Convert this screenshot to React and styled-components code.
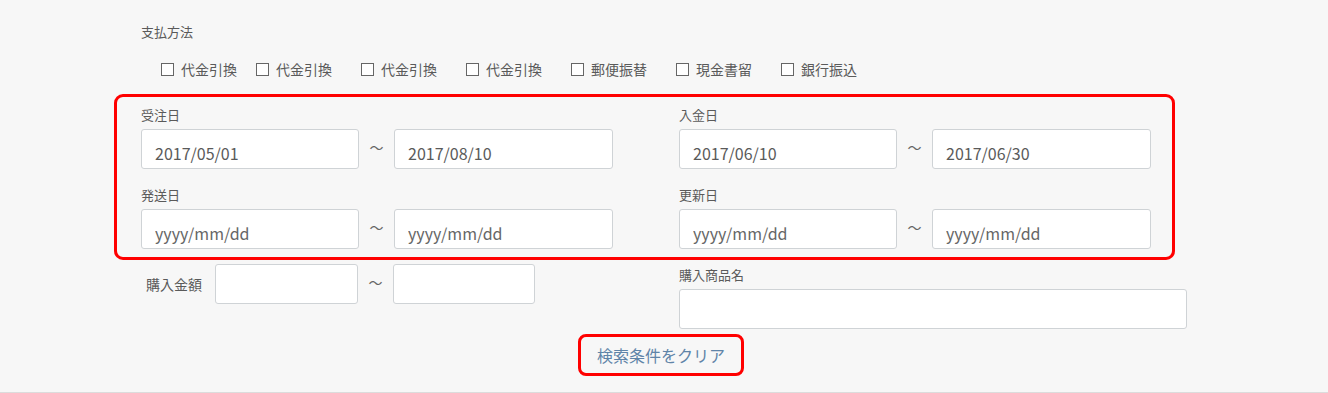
import React from "react";
import styled, { createGlobalStyle } from "styled-components";

const Global = createGlobalStyle`
  html, body { margin: 0; padding: 0; background: #f7f7f7; }
  body { font-family: "Noto Sans CJK JP", "Noto Sans", sans-serif; color: #555; }
  * { box-sizing: border-box; }
`;

const Page = styled.div`
  width: 1328px;
  height: 393px;
  background: #f7f7f7;
  border-bottom: 1px solid #dcdcdc;
  padding-top: 22px;
`;

const Inner = styled.div`
  padding-left: 141px;
`;

const SectionLabel = styled.div`
  font-size: 13px;
  line-height: 20px;
  color: #5a5a5a;
`;

const CheckRow = styled.div`
  display: flex;
  padding-left: 20px;
  margin-top: 17px;
  height: 20px;
  align-items: center;
`;

const CheckItem = styled.label`
  display: flex;
  align-items: center;
  width: ${(p) => (p.$narrow ? 95 : 105)}px;
  font-size: 14px;
  color: #5a5a5a;
  line-height: 20px;
`;

const Box = styled.span`
  width: 13px;
  height: 13px;
  border: 1px solid #666;
  background: #fff;
  margin-right: 7px;
  flex: none;
`;

const Highlight = styled.div`
  margin: 15px 0 0 114px;
  width: 1061px;
  border: 3px solid #ff0000;
  border-radius: 9px;
  padding: 8px 22px 8px 24px;
  display: grid;
  grid-template-columns: 472px 472px;
  column-gap: 66px;
  row-gap: 16px;
`;

const Field = styled.div`
  display: flex;
  flex-direction: column;
`;

const FieldLabel = styled.div`
  font-size: 13px;
  line-height: 20px;
  color: #5a5a5a;
  margin-bottom: 4px;
`;

const Range = styled.div`
  display: flex;
  align-items: center;
`;

const Input = styled.input`
  width: ${(p) => p.$w || 218}px;
  height: 40px;
  border: 1px solid #cfd3d6;
  border-radius: 3px;
  background: #fff;
  padding: 8px 13px 0 13px;
  font-family: "Noto Sans CJK JP", "Noto Sans", sans-serif;
  font-size: 16px;
  color: #5a5a5a;
  outline: none;
  &::placeholder { color: #666; opacity: 1; }
`;

const Tilde = styled.span`
  width: ${(p) => p.$w || 35}px;
  text-align: center;
  font-size: 14px;
  color: #666;
  margin-top: -5px;
`;

const Bottom = styled.div`
  display: flex;
  padding-left: 141px;
  margin-top: 4px;
`;

const AmountRow = styled.div`
  display: flex;
  align-items: center;
  width: 538px;
  height: 40px;
`;

const AmountLabel = styled.span`
  font-size: 14px;
  margin-left: 5px;
  width: 69px;
  color: #5a5a5a;
`;

const NameField = styled.div`
  display: flex;
  flex-direction: column;
  margin-top: 1px;
`;

const ClearWrap = styled.div`
  display: flex;
  padding-left: 578px;
  margin-top: 5px;
`;

const ClearButton = styled.button`
  width: 166px;
  height: 42px;
  border: 3px solid #ff0000;
  border-radius: 8px;
  background: transparent;
  font-family: "Noto Sans CJK JP", "Noto Sans", sans-serif;
  font-size: 16px;
  color: #5f84a8;
  padding: 0;
  cursor: pointer;
`;

const payments = ["代金引換", "代金引換", "代金引換", "代金引換", "郵便振替", "現金書留", "銀行振込"];

const dates = [
  { label: "受注日", from: "2017/05/01", to: "2017/08/10" },
  { label: "入金日", from: "2017/06/10", to: "2017/06/30" },
  { label: "発送日", from: "", to: "" },
  { label: "更新日", from: "", to: "" },
];

export default function App() {
  return (
    <>
      <Global />
      <Page>
        <Inner>
          <SectionLabel>支払方法</SectionLabel>
          <CheckRow>
            {payments.map((p, i) => (
              <CheckItem key={i} $narrow={i === 0}>
                <Box />
                {p}
              </CheckItem>
            ))}
          </CheckRow>
        </Inner>
        <Highlight>
          {dates.map((d) => (
            <Field key={d.label}>
              <FieldLabel>{d.label}</FieldLabel>
              <Range>
                <Input defaultValue={d.from} placeholder="yyyy/mm/dd" />
                <Tilde>〜</Tilde>
                <Input $w={219} defaultValue={d.to} placeholder="yyyy/mm/dd" />
              </Range>
            </Field>
          ))}
        </Highlight>
        <Bottom>
          <AmountRow>
            <AmountLabel>購入金額</AmountLabel>
            <Input $w={143} />
            <Tilde>〜</Tilde>
            <Input $w={142} />
          </AmountRow>
          <NameField>
            <FieldLabel>購入商品名</FieldLabel>
            <Input $w={508} />
          </NameField>
        </Bottom>
        <ClearWrap>
          <ClearButton>検索条件をクリア</ClearButton>
        </ClearWrap>
      </Page>
    </>
  );
}
